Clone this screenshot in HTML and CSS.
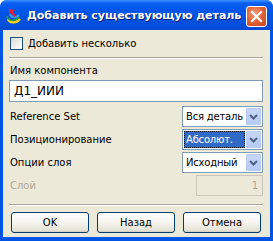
FILE: index.html
```html
<!DOCTYPE html>
<html lang="ru">
<head>
  <meta charset="UTF-8">
  <title>Добавить существующую деталь</title>
  <link rel="stylesheet" href="styles.css">
</head>
<body>
  <div class="window">
    <div class="titlebar">
      <svg class="app-icon" width="18" height="18" viewBox="0 0 18 18">
        <path d="M3 12 C4 16 11 17 15 12" fill="none" stroke="#f6d21c" stroke-width="2.5"/>
        <path d="M2 9 C3 14 10 15 14 10" fill="none" stroke="#2a9a3c" stroke-width="1.5"/>
        <path d="M5 7 C6 11 11 11 14 8" fill="none" stroke="#3fa0f0" stroke-width="2"/>
        <path d="M4 2 L10 3 L8 5 L11 9 L9 10 L6 6 L4 8 Z" fill="#e0203a"/>
      </svg>
      <span class="title">Добавить существующую деталь</span>
      <button class="close" aria-label="Закрыть">
        <svg width="13" height="13" viewBox="0 0 13 13">
          <path d="M2 2 L11 11 M11 2 L2 11" stroke="#fff" stroke-width="2.2" stroke-linecap="square"/>
        </svg>
      </button>
    </div>

    <div class="client">
      <label class="check-row">
        <span class="checkbox"></span>
        Добавить несколько
      </label>

      <div class="separator"></div>

      <div class="field-label">Имя компонента</div>
      <div class="textbox">Д1_ИИИ</div>

      <div class="row first">
        <span class="row-label">Reference Set</span>
        <div class="combo">
          <span class="combo-text">Вся деталь</span>
          <span class="combo-arrow"><svg width="9" height="6" viewBox="0 0 9 6"><path d="M1 1 L4.5 4.5 L8 1" fill="none" stroke="#4d6185" stroke-width="2"/></svg></span>
        </div>
      </div>

      <div class="row">
        <span class="row-label">Позиционирование</span>
        <div class="combo">
          <span class="combo-text selected">Абсолют.</span>
          <span class="combo-arrow"><svg width="9" height="6" viewBox="0 0 9 6"><path d="M1 1 L4.5 4.5 L8 1" fill="none" stroke="#4d6185" stroke-width="2"/></svg></span>
        </div>
      </div>

      <div class="row">
        <span class="row-label">Опции слоя</span>
        <div class="combo">
          <span class="combo-text">Исходный</span>
          <span class="combo-arrow"><svg width="9" height="6" viewBox="0 0 9 6"><path d="M1 1 L4.5 4.5 L8 1" fill="none" stroke="#4d6185" stroke-width="2"/></svg></span>
        </div>
      </div>

      <div class="row">
        <span class="row-label disabled">Слой</span>
        <div class="textbox small disabled">1</div>
      </div>

      <div class="separator lower"></div>

      <div class="buttons">
        <button class="btn">OK</button>
        <button class="btn">Назад</button>
        <button class="btn">Отмена</button>
      </div>
    </div>
  </div>
</body>
</html>
```

FILE: styles.css
```css
* {
  box-sizing: border-box;
}

body {
  margin: 0;
  background: #fff;
  font-family: "DejaVu Sans", Verdana, sans-serif;
  font-size: 10px;
  color: #000;
}

.window {
  width: 273px;
  height: 241px;
  display: flex;
  flex-direction: column;
  background: #0054e3;
  padding: 0 3px 4px 3px;
  border-radius: 7px 7px 0 0;
}

.titlebar {
  height: 30px;
  margin: 0 -3px;
  padding: 0 6px 0 5px;
  display: flex;
  align-items: center;
  border-radius: 7px 7px 0 0;
  background: linear-gradient(#3d95ff 0, #0a5ff0 3px, #0058ee 8px, #0054e3 50%, #004fdb 85%, #0049d2 100%);
}

.app-icon {
  flex: none;
  margin-top: 1px;
}

.title {
  flex: 1;
  min-width: 0;
  overflow: hidden;
  margin-left: 4px;
  color: #fff;
  font-family: "DejaVu Sans", sans-serif;
  font-weight: bold;
  font-size: 11px;
  text-shadow: 1px 1px 0 #0a1e7a;
  white-space: nowrap;
}

.close {
  flex: none;
  width: 21px;
  height: 21px;
  padding: 0;
  margin-top: 3px;
  border: 1px solid #fff;
  border-radius: 3px;
  background: radial-gradient(circle at 40% 35%, #f2a07e 0, #e3653a 45%, #c9401a 100%);
  display: flex;
  align-items: center;
  justify-content: center;
}

.client {
  flex: 1;
  background: #ece9d8;
  padding: 0 7px 0 6px;
  display: flex;
  flex-direction: column;
}

.check-row {
  display: flex;
  align-items: center;
  height: 13px;
  margin-top: 7px;
  gap: 5px;
  padding-left: 1px;
}

.checkbox {
  width: 13px;
  height: 13px;
  border: 1px solid #1c5180;
  background: linear-gradient(135deg, #dcdcd7 0, #f5f5f3 70%, #fff 100%);
}

.separator {
  height: 2px;
  margin-top: 7px;
  border-top: 1px solid #aca899;
  border-bottom: 1px solid #fff;
}

.separator.lower {
  margin-top: 8px;
}

.field-label {
  height: 13px;
  line-height: 13px;
  margin-top: 5px;
  padding-left: 1px;
}

.textbox {
  height: 22px;
  margin-top: 3px;
  border: 1px solid #7f9db9;
  background: #fff;
  padding: 0 4px;
  display: flex;
  align-items: center;
  font-size: 12px;
}

.textbox.small {
  width: 67px;
  height: 21px;
  margin-top: 0;
  justify-content: flex-end;
  font-size: 10px;
}

.textbox.disabled {
  background: #ece9d8;
  border-color: #c9c7ba;
  color: #aca899;
}

.row {
  display: flex;
  align-items: center;
  justify-content: space-between;
  height: 21px;
  margin-top: 2px;
  padding-left: 1px;
}

.row.first {
  margin-top: 4px;
}

.row-label.disabled {
  color: #aca899;
}

.combo {
  width: 81px;
  height: 21px;
  border: 1px solid #7f9db9;
  background: #fff;
  display: flex;
  padding: 1px;
}

.combo-text {
  flex: 1;
  display: flex;
  align-items: center;
  padding-left: 2px;
  letter-spacing: -0.2px;
  white-space: nowrap;
  overflow: hidden;
}

.combo-text.selected {
  background: #316ac5;
  color: #fff;
  outline: 1px dotted #000;
  outline-offset: -1px;
  margin-right: 1px;
}

.combo-arrow {
  width: 15px;
  flex: none;
  display: flex;
  align-items: center;
  justify-content: center;
  background: linear-gradient(#c8d7fb, #b6caf5);
  border: 1px solid #b9cbf3;
  border-radius: 1px;
}

.buttons {
  display: flex;
  gap: 8px;
  margin-top: 6px;
  padding-left: 2px;
}

.btn {
  width: 78px;
  height: 21px;
  padding: 0;
  font-family: "DejaVu Sans", Verdana, sans-serif;
  font-size: 10px;
  color: #000;
  border: 1px solid #003c74;
  border-radius: 3px;
  background: linear-gradient(#ffffff 0, #f5f4ef 50%, #e6e3d6 90%, #d6d0c5 100%);
}
```
